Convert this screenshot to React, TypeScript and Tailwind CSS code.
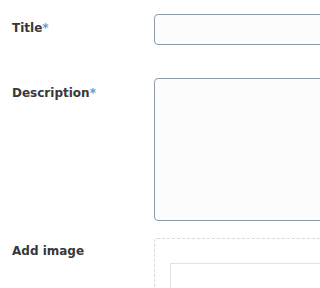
export default function App() {
  return (
    <div className="w-screen h-screen bg-white overflow-hidden font-['DejaVu_Sans',sans-serif] text-[12px] text-[#383838]">
      <div className="flex flex-col pt-[14px] pl-[12px]">
        <div className="flex">
          <label className="w-[142px] shrink-0 pt-[5px] font-bold leading-[18px]">
            Title<span className="text-[#5b9bd0]">*</span>
          </label>
          <input
            type="text"
            className="w-[200px] shrink-0 h-[31px] rounded-[4px] border border-[#8d9aab] bg-[#fcfcfc] outline-none"
          />
        </div>
        <div className="flex mt-[33px]">
          <label className="w-[142px] shrink-0 pt-[6px] font-bold leading-[18px]">
            Description<span className="text-[#5b9bd0]">*</span>
          </label>
          <textarea className="w-[200px] shrink-0 h-[143px] rounded-[4px] border border-[#8d9aab] bg-[#fcfcfc] outline-none resize-none" />
        </div>
        <div className="flex mt-[17px]">
          <label className="w-[142px] shrink-0 pt-[4px] font-bold leading-[18px]">Add image</label>
          <div className="w-[200px] shrink-0 h-[80px] border border-dashed border-[#d9d9d9] rounded-[3px] pt-[24px] pl-[15px]">
            <div className="h-[60px] border border-[#e3e3e3] bg-white" />
          </div>
        </div>
      </div>
    </div>
  );
}
